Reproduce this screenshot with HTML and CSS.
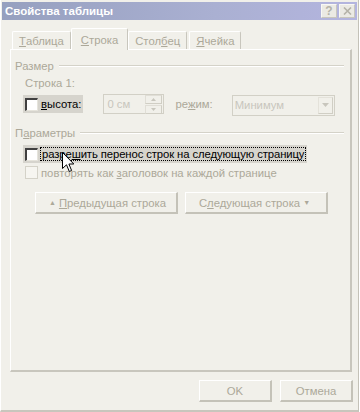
FILE: index.html
```html
<!DOCTYPE html>
<html>
<head>
    <title>Свойства таблицы</title>
    <link rel="stylesheet" href="styles.css">
</head>
<body>
    <div class="window">
        <div class="titlebar">
            <span class="title">Свойства таблицы</span>
            <div class="caption-btns">
                <span class="cap-btn">?</span>
                <span class="cap-btn">
                    <svg width="9" height="8" viewBox="0 0 9 8"><path d="M1 0.5 L8 7.5 M8 0.5 L1 7.5" stroke="#b4b2a8" stroke-width="1.6"/></svg>
                </span>
            </div>
        </div>

        <div class="tabs">
            <span class="tab"><u>Т</u>аблица</span>
            <span class="tab active"><u>С</u>трока</span>
            <span class="tab">Стол<u>б</u>ец</span>
            <span class="tab"><u>Я</u>чейка</span>
        </div>

        <div class="panel">
            <div class="group-head"><span>Размер</span><span class="rule"></span></div>
            <div class="sub-label">Строка 1:</div>
            <div class="size-row">
                <div class="check hl">
                    <span class="box"></span>
                    <span class="enabled"><u>в</u>ысота:</span>
                </div>
                <div class="spin">
                    <span>0 см</span>
                    <div class="spin-btns">
                        <span class="spin-btn"><svg width="5" height="3" viewBox="0 0 5 3"><path d="M2.5 0 L5 3 L0 3 Z" fill="#c8c6bd"/></svg></span>
                        <span class="spin-btn"><svg width="5" height="3" viewBox="0 0 5 3"><path d="M0 0 L5 0 L2.5 3 Z" fill="#c8c6bd"/></svg></span>
                    </div>
                </div>
                <span class="mode-label">ре<u>ж</u>им:</span>
                <div class="combo">
                    <span>Минимум</span>
                    <span class="combo-btn"><svg width="7" height="4" viewBox="0 0 7 4"><path d="M0 0 L7 0 L3.5 4 Z" fill="#c8c6bd"/></svg></span>
                </div>
            </div>

            <div class="group-head params"><span>П<u>а</u>раметры</span><span class="rule"></span></div>
            <div class="check-line first">
                <div class="check hl">
                    <span class="box"></span>
                    <span class="enabled focus">разре<u>ш</u>ить перенос строк на следующую страницу</span>
                </div>
            </div>
            <div class="check-line">
                <div class="check off">
                    <span class="box"></span>
                    <span>повторять как <u>з</u>аголовок на каждой странице</span>
                </div>
            </div>

            <div class="nav-btns">
                <span class="btn nav"><span class="arr">&#9650;</span> <u>П</u>редыдущая строка</span>
                <span class="btn nav">С<u>л</u>едующая строка <span class="arr">&#9660;</span></span>
            </div>
        </div>

        <div class="footer">
            <span class="btn dlg">OK</span>
            <span class="btn dlg">Отмена</span>
        </div>

        <svg class="cursor" width="13" height="22" viewBox="0 0 13 22">
            <path d="M0.5 0.5 L0.5 16.5 L4.5 12.8 L7.3 19.5 L9.6 18.5 L6.9 12 L11.8 12 Z" fill="#fff" stroke="#000" stroke-width="1"/>
        </svg>
    </div>
</body>
</html>
```

FILE: styles.css
```css
body {
    margin: 0;
    padding: 0;
    background-color: #ffffff;
    font-family: "Liberation Sans", Arial, sans-serif;
    font-size: 11.3px;
    color: #aca899;
}

u {
    text-decoration: underline;
    text-underline-offset: 1px;
}

.window {
    position: relative;
    width: 356px;
    height: 408px;
    padding: 2px 0 0 1px;
    border-left: 1px solid #ffffff;
    border-right: 1px solid #c4c2b8;
    border-bottom: 2px solid #c8c6bd;
    background-color: #f1f0ea;
    display: flex;
    flex-direction: column;
}

.titlebar {
    height: 18px;
    margin-right: 1px;
    display: flex;
    justify-content: space-between;
    align-items: center;
    background: linear-gradient(to right, #96a0bf, #aab0d2 60%, #b4b5df);
}

.title {
    padding-left: 3px;
    color: #ffffff;
    font-weight: bold;
    font-size: 11.5px;
}

.caption-btns {
    display: flex;
    gap: 2px;
    padding-right: 2px;
}

.cap-btn {
    width: 16px;
    height: 14px;
    display: flex;
    align-items: center;
    justify-content: center;
    background-color: #ebeae4;
    border-top: 1px solid #f8f8f4;
    border-left: 1px solid #f8f8f4;
    border-right: 1px solid #c8c6bd;
    border-bottom: 1px solid #c8c6bd;
    box-sizing: border-box;
    color: #b4b2a8;
    font-weight: bold;
    font-size: 12px;
}

.tabs {
    display: flex;
    align-items: flex-end;
    height: 22px;
    margin-top: 7px;
    padding-left: 10px;
    position: relative;
    z-index: 1;
}

.tab {
    height: 18px;
    margin-right: 2px;
    padding: 0 6px;
    display: flex;
    align-items: center;
    box-sizing: border-box;
    border-top: 1px solid #ffffff;
    border-left: 1px solid #ffffff;
    border-right: 1px solid #c8c6bd;
    border-radius: 2px 2px 0 0;
}

.tab.active {
    height: 22px;
    margin: 0 0 -1px -2px;
    padding: 0 9px;
    background-color: #f1f0ea;
}

.panel {
    margin-left: 8px;
    width: 342px;
    height: 323px;
    box-sizing: border-box;
    border-top: 1px solid #ffffff;
    border-left: 1px solid #ffffff;
    border-right: 2px solid #c8c6bd;
    border-bottom: 2px solid #c8c6bd;
    padding: 9px 0 0 4px;
    display: flex;
    flex-direction: column;
}

.group-head {
    display: flex;
    align-items: center;
    gap: 5px;
    height: 13px;
    padding-right: 6px;
}

.rule {
    flex: 1;
    height: 0;
    border-top: 1px solid #d4d2c8;
    border-bottom: 1px solid #ffffff;
}

.sub-label {
    margin: 5px 0 0 10px;
    height: 13px;
}

.size-row {
    display: flex;
    align-items: center;
    margin-top: 4px;
    height: 20px;
}

.check-line {
    display: flex;
    margin-top: 2px;
}

.check-line.first {
    margin-top: 6px;
}

.check {
    display: flex;
    align-items: center;
    gap: 3px;
    height: 18px;
    padding: 0 2px;
    margin-left: 8px;
    white-space: nowrap;
}

.check.hl {
    background-color: #d6d4cd;
}

.box {
    width: 13px;
    height: 13px;
    flex-shrink: 0;
    box-sizing: border-box;
    background-color: #ffffff;
    border-top: 2px solid #404040;
    border-left: 2px solid #404040;
    border-right: 1px solid #e6e4dc;
    border-bottom: 1px solid #e6e4dc;
}

.enabled {
    color: #000000;
}

.focus {
    outline: 1px dotted #000000;
    padding: 0 1px;
    letter-spacing: -0.1px;
}

.spin {
    width: 61px;
    height: 20px;
    margin-left: 20px;
    box-sizing: border-box;
    border: 1px solid #d2d0c6;
    display: flex;
    align-items: center;
    justify-content: space-between;
    padding-left: 3px;
    color: #c8c6bd;
}

.spin-btns {
    display: flex;
    flex-direction: column;
    gap: 1px;
    padding: 1px;
}

.spin-btn {
    width: 15px;
    height: 7px;
    display: flex;
    align-items: center;
    justify-content: center;
    border: 1px solid #e0ded6;
    border-right-color: #d0cec4;
    border-bottom-color: #d0cec4;
}

.mode-label {
    margin-left: 11px;
}

.combo {
    width: 103px;
    height: 21px;
    margin-left: 19px;
    margin-top: 2px;
    box-sizing: border-box;
    border: 1px solid #d2d0c6;
    display: flex;
    align-items: center;
    justify-content: space-between;
    padding: 0 1px 0 2px;
    color: #c8c6bd;
}

.combo-btn {
    width: 15px;
    height: 17px;
    box-sizing: border-box;
    display: flex;
    align-items: center;
    justify-content: center;
    border: 1px solid #e4e2da;
    border-right-color: #d0cec4;
    border-bottom-color: #d0cec4;
}

.group-head.params {
    margin-top: 12px;
}

.check.off {
    height: 15px;
}

.check.off .box {
    background-color: #f6f5f0;
    border: 1px solid #d4d2c8;
}

.nav-btns {
    display: flex;
    gap: 7px;
    margin: 12px 0 0 20px;
}

.btn {
    display: flex;
    align-items: center;
    justify-content: center;
    box-sizing: border-box;
    height: 22px;
    border-top: 1px solid #ffffff;
    border-left: 1px solid #ffffff;
    border-right: 2px solid #c4c2b8;
    border-bottom: 2px solid #c4c2b8;
    color: #aca899;
}

.btn.nav {
    width: 143px;
}

.arr {
    font-size: 7px;
    margin: 0 3px;
}

.footer {
    display: flex;
    justify-content: flex-end;
    gap: 8px;
    margin-top: 8px;
    padding-right: 5px;
}

.btn.dlg {
    width: 73px;
}

.cursor {
    position: absolute;
    left: 61px;
    top: 152px;
}
```
